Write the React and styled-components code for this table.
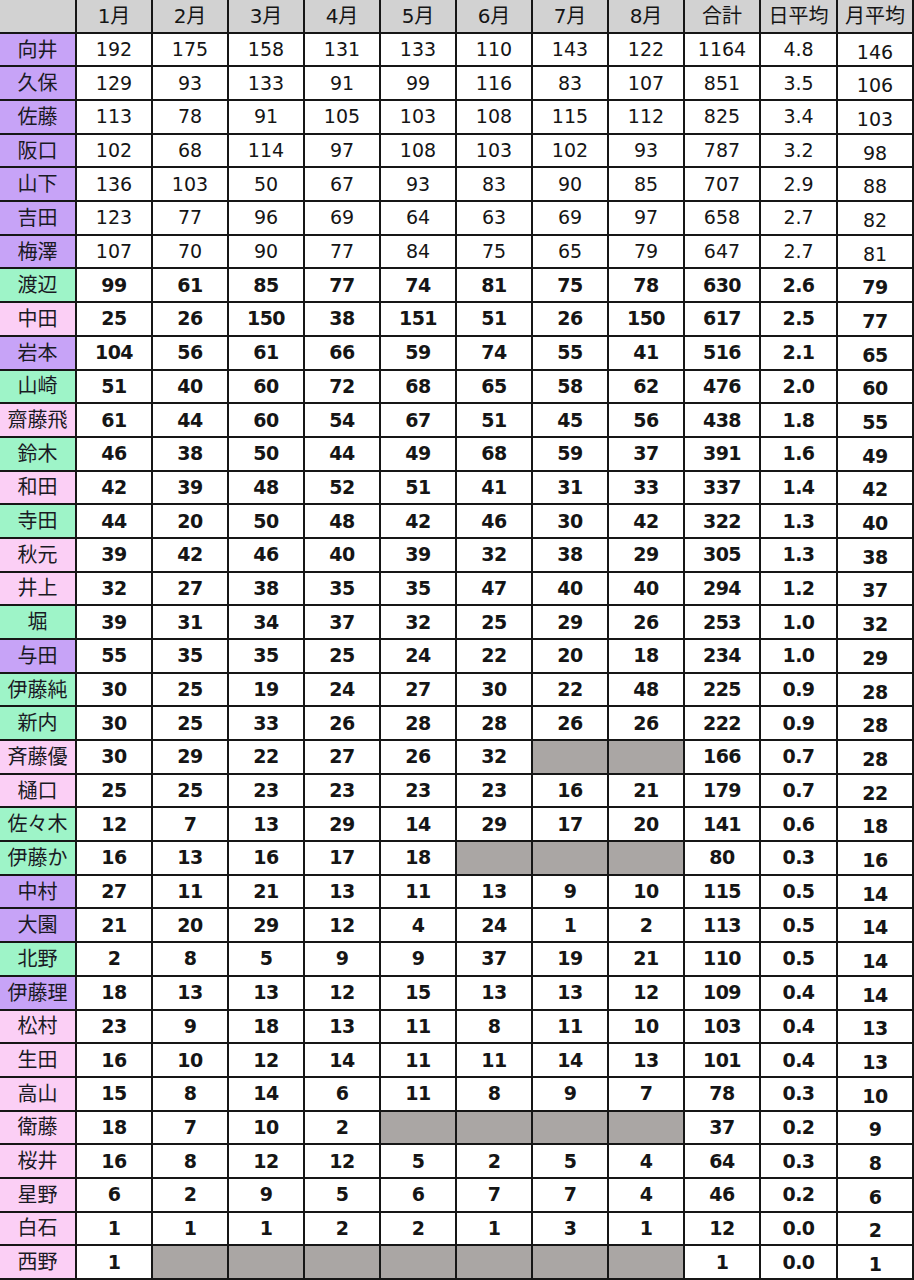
import React from 'react';
import styled, { createGlobalStyle } from 'styled-components';

const GlobalStyle = createGlobalStyle`
  body {
    margin: 0;
    padding: 0;
    background: #ffffff;
    font-family: "DejaVu Sans", "Noto Sans CJK JP", sans-serif;
  }
`;

const COLORS = {
  P: '#c7a3f7',
  G: '#9ef4c8',
  K: '#fbcff5',
};

const HEAD = ['', '1月', '2月', '3月', '4月', '5月', '6月', '7月', '8月', '合計', '日平均', '月平均'];

// name, colour, Jan..Aug (null = blank), total, per day, per month
const ROWS = [
  ['向井', 'P', [192, 175, 158, 131, 133, 110, 143, 122], 1164, '4.8', 146],
  ['久保', 'P', [129, 93, 133, 91, 99, 116, 83, 107], 851, '3.5', 106],
  ['佐藤', 'P', [113, 78, 91, 105, 103, 108, 115, 112], 825, '3.4', 103],
  ['阪口', 'P', [102, 68, 114, 97, 108, 103, 102, 93], 787, '3.2', 98],
  ['山下', 'P', [136, 103, 50, 67, 93, 83, 90, 85], 707, '2.9', 88],
  ['吉田', 'P', [123, 77, 96, 69, 64, 63, 69, 97], 658, '2.7', 82],
  ['梅澤', 'P', [107, 70, 90, 77, 84, 75, 65, 79], 647, '2.7', 81],
  ['渡辺', 'G', [99, 61, 85, 77, 74, 81, 75, 78], 630, '2.6', 79],
  ['中田', 'K', [25, 26, 150, 38, 151, 51, 26, 150], 617, '2.5', 77],
  ['岩本', 'P', [104, 56, 61, 66, 59, 74, 55, 41], 516, '2.1', 65],
  ['山崎', 'G', [51, 40, 60, 72, 68, 65, 58, 62], 476, '2.0', 60],
  ['齋藤飛', 'K', [61, 44, 60, 54, 67, 51, 45, 56], 438, '1.8', 55],
  ['鈴木', 'G', [46, 38, 50, 44, 49, 68, 59, 37], 391, '1.6', 49],
  ['和田', 'K', [42, 39, 48, 52, 51, 41, 31, 33], 337, '1.4', 42],
  ['寺田', 'G', [44, 20, 50, 48, 42, 46, 30, 42], 322, '1.3', 40],
  ['秋元', 'K', [39, 42, 46, 40, 39, 32, 38, 29], 305, '1.3', 38],
  ['井上', 'K', [32, 27, 38, 35, 35, 47, 40, 40], 294, '1.2', 37],
  ['堀', 'G', [39, 31, 34, 37, 32, 25, 29, 26], 253, '1.0', 32],
  ['与田', 'P', [55, 35, 35, 25, 24, 22, 20, 18], 234, '1.0', 29],
  ['伊藤純', 'G', [30, 25, 19, 24, 27, 30, 22, 48], 225, '0.9', 28],
  ['新内', 'G', [30, 25, 33, 26, 28, 28, 26, 26], 222, '0.9', 28],
  ['斉藤優', 'K', [30, 29, 22, 27, 26, 32, null, null], 166, '0.7', 28],
  ['樋口', 'K', [25, 25, 23, 23, 23, 23, 16, 21], 179, '0.7', 22],
  ['佐々木', 'G', [12, 7, 13, 29, 14, 29, 17, 20], 141, '0.6', 18],
  ['伊藤か', 'G', [16, 13, 16, 17, 18, null, null, null], 80, '0.3', 16],
  ['中村', 'P', [27, 11, 21, 13, 11, 13, 9, 10], 115, '0.5', 14],
  ['大園', 'P', [21, 20, 29, 12, 4, 24, 1, 2], 113, '0.5', 14],
  ['北野', 'G', [2, 8, 5, 9, 9, 37, 19, 21], 110, '0.5', 14],
  ['伊藤理', 'P', [18, 13, 13, 12, 15, 13, 13, 12], 109, '0.4', 14],
  ['松村', 'K', [23, 9, 18, 13, 11, 8, 11, 10], 103, '0.4', 13],
  ['生田', 'K', [16, 10, 12, 14, 11, 11, 14, 13], 101, '0.4', 13],
  ['高山', 'K', [15, 8, 14, 6, 11, 8, 9, 7], 78, '0.3', 10],
  ['衛藤', 'K', [18, 7, 10, 2, null, null, null, null], 37, '0.2', 9],
  ['桜井', 'K', [16, 8, 12, 12, 5, 2, 5, 4], 64, '0.3', 8],
  ['星野', 'K', [6, 2, 9, 5, 6, 7, 7, 4], 46, '0.2', 6],
  ['白石', 'K', [1, 1, 1, 2, 2, 1, 3, 1], 12, '0.0', 2],
  ['西野', 'K', [1, null, null, null, null, null, null, null], 1, '0.0', 1],
];

const Table = styled.div`
  display: grid;
  grid-template-columns: 75px repeat(9, 74px) 75px 74px;
  grid-auto-rows: 1fr;
  gap: 2px;
  width: 914px;
  height: 1280px;
  box-sizing: border-box;
  padding: 0 2px 2px 0;
  background: #161616;
  overflow: hidden;
`;

const Cell = styled.div`
  display: flex;
  align-items: center;
  justify-content: center;
  background: ${(p) => p.$bg || '#ffffff'};
  color: #151515;
  font-size: 19px;
  font-weight: ${(p) => (p.$bold ? 700 : 400)};
  letter-spacing: ${(p) => (p.$bold ? '-0.5px' : '0')};
  padding-top: ${(p) => (p.$low ? '5px' : '0')};
  line-height: 1;
  white-space: nowrap;
`;

const HeadCell = styled(Cell)`
  background: #d2d2d2;
  font-weight: 400;
  font-size: 20px;
`;

const NameCell = styled(Cell)`
  font-weight: 400;
  font-size: 20px;
  letter-spacing: 0;
  color: #1a1a24;
`;

const BLANK = '#aaa6a4';

const App = () => (
  <>
    <GlobalStyle />
    <Table>
      {HEAD.map((h, i) => (
        <HeadCell key={'h' + i}>{h}</HeadCell>
      ))}
      {ROWS.map(([name, c, months, total, day, month], r) => {
        const bold = r >= 7;
        return (
          <React.Fragment key={name}>
            <NameCell $bg={COLORS[c]}>{name}</NameCell>
            {months.map((m, i) =>
              m === null ? (
                <Cell key={i} $bg={BLANK} />
              ) : (
                <Cell key={i} $bold={bold}>{m}</Cell>
              )
            )}
            <Cell $bold={bold}>{total}</Cell>
            <Cell $bold={bold}>{day}</Cell>
            <Cell $bold={bold} $low>{month}</Cell>
          </React.Fragment>
        );
      })}
    </Table>
  </>
);

export default App;
